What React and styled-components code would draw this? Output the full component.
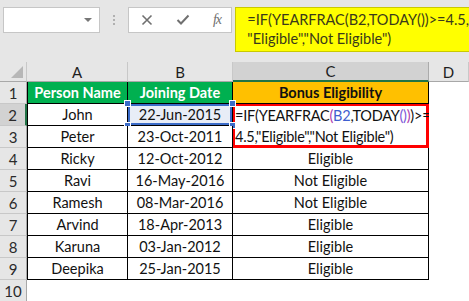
import { createGlobalStyle, styled } from "styled-components";

const Global = createGlobalStyle`
  html, body {
    margin: 0;
    padding: 0;
    background: #ffffff;
  }
  body {
    width: 469px;
    height: 301px;
    overflow: hidden;
    font-family: Lato, "Open Sans", sans-serif;
  }
`;

const Wrap = styled.div`
  width: 469px;
  height: 301px;
  overflow: hidden;
  background: #ffffff;
`;

const TopBar = styled.div`
  height: 62px;
  background: #e6e6e6;
  display: flex;
  align-items: flex-start;
  padding: 7px 0 0 3px;
  box-sizing: border-box;
`;

const NameBox = styled.div`
  width: 102px;
  height: 26px;
  box-sizing: border-box;
  background: #ffffff;
  border: 1px solid #c6c6c6;
  display: flex;
  align-items: center;
  justify-content: flex-end;
  padding-right: 7px;
`;

const Caret = styled.div`
  width: 0;
  height: 0;
  border-left: 4px solid transparent;
  border-right: 4px solid transparent;
  border-top: 4px solid #777777;
`;

const Dots = styled.div`
  width: 30px;
  height: 26px;
  display: flex;
  flex-direction: column;
  align-items: center;
  justify-content: center;
  gap: 2px;
  span {
    width: 2px;
    height: 2px;
    background: #b0b0b0;
  }
`;

const FormulaTools = styled.div`
  width: 110px;
  height: 26px;
  box-sizing: border-box;
  background: #ffffff;
  border: 1px solid #c6c6c6;
  display: flex;
  align-items: center;
  gap: 23px;
  padding-left: 12px;
`;

const Fx = styled.span`
  font-family: "Liberation Serif", serif;
  font-style: italic;
  font-size: 14px;
  color: #6e6e6e;
  letter-spacing: -1px;
`;

const Callout = styled.div`
  margin-left: 3px;
  flex: 1;
  height: 45px;
  box-sizing: border-box;
  background: #ffff00;
  border: 1px solid #c9c900;
  border-right: none;
  padding: 2px 0 0 11px;
  font-size: 14.5px;
  line-height: 19px;
  color: #3a3a1a;
  white-space: nowrap;
`;

const Sheet = styled.div`
  display: grid;
  grid-template-columns: 27px 101px 105px 196px 40px;
  grid-template-rows: 20px;
  grid-auto-rows: 22px;
  font-size: 14.5px;
`;

const Corner = styled.div`
  background: #e6e6e6;
  border-right: 1px solid #c8c8c8;
  border-bottom: 1px solid #a8a8a8;
  position: relative;
  &::after {
    content: "";
    position: absolute;
    right: 3px;
    bottom: 3px;
    width: 0;
    height: 0;
    border-left: 12px solid transparent;
    border-bottom: 12px solid #b7b7b7;
  }
`;

const ColHead = styled.div`
  background: ${(p) => (p.$active ? "#d2d2d2" : "#e6e6e6")};
  border-right: 1px solid ${(p) => (p.$active ? "#ababab" : "#c8c8c8")};
  border-bottom: ${(p) => (p.$active ? "2px solid #217346" : "1px solid #a8a8a8")};
  display: flex;
  align-items: center;
  justify-content: center;
  font-size: 15px;
  color: #1e1e1e;
`;

const RowHead = styled.div`
  background: ${(p) => (p.$active ? "#d2d2d2" : "#e6e6e6")};
  border-right: ${(p) => (p.$active ? "2px solid #217346" : "1px solid #a8a8a8")};
  border-bottom: 1px solid #c8c8c8;
  display: flex;
  align-items: center;
  justify-content: center;
  font-size: 15px;
  color: #2a2a2a;
`;

const Cell = styled.div`
  position: relative;
  box-sizing: border-box;
  border-right: 1px solid ${(p) => (p.$empty ? "transparent" : "#000")};
  border-bottom: 1px solid ${(p) => (p.$empty ? "transparent" : "#000")};
  background: ${(p) => p.$bg || "#ffffff"};
  color: ${(p) => (p.$bg ? "#ffffff" : "#111111")};
  font-weight: ${(p) => (p.$bold ? 700 : 400)};
  display: flex;
  align-items: center;
  justify-content: center;
  white-space: nowrap;
`;

const FirstCell = styled(Cell)`
  border-left: 1px solid #000;
`;

const HeadCell = styled(Cell)`
  color: ${(p) => (p.$dark ? "#111" : "#fff")};
`;

const FirstHeadCell = styled(HeadCell)`
  border-left: 1px solid #000;
`;

const Selected = styled(Cell)`
  background: #e8edf7;
  box-shadow: inset 0 0 0 2px #3b6cc9;
`;

const Handle = styled.span`
  position: absolute;
  width: 5px;
  height: 5px;
  background: #3b6cc9;
  border: 1px solid #ffffff;
  ${(p) => (p.$top ? "top: -4px;" : "bottom: -4px;")}
  ${(p) => (p.$left ? "left: -4px;" : "right: -4px;")}
`;

const FormulaCell = styled.div`
  grid-row: span 2;
  box-sizing: border-box;
  border: 3px solid #ff0000;
  margin: -1px 0 0 -1px;
  display: flex;
  flex-direction: column;
  justify-content: center;
  line-height: 21px;
  white-space: nowrap;
  color: #111;
  letter-spacing: -0.25px;
`;

const Ref = styled.span`
  color: ${(p) => p.$c};
`;

const rows = [
  ["Ricky", "12-Oct-2012", "Eligible"],
  ["Ravi", "16-May-2016", "Not Eligible"],
  ["Ramesh", "08-Mar-2016", "Not Eligible"],
  ["Arvind", "18-Apr-2013", "Eligible"],
  ["Karuna", "03-Jan-2012", "Eligible"],
  ["Deepika", "25-Jan-2015", "Eligible"],
];

function Row({ n, r }) {
  return (
    <>
      <RowHead>{n}</RowHead>
      <FirstCell>{r[0]}</FirstCell>
      <Cell>{r[1]}</Cell>
      <Cell>{r[2]}</Cell>
      <Cell $empty />
    </>
  );
}

export default function App() {
  return (
    <Wrap>
      <Global />
      <TopBar>
        <NameBox>
          <Caret />
        </NameBox>
        <Dots>
          <span />
          <span />
          <span />
        </Dots>
        <FormulaTools>
          <svg width="12" height="12" viewBox="0 0 12 12">
            <path d="M1.5 1.5 L10.5 10.5 M10.5 1.5 L1.5 10.5" stroke="#707070" strokeWidth="1.6" />
          </svg>
          <svg width="14" height="12" viewBox="0 0 14 12">
            <path d="M1.5 6 L5 9.5 L12.5 1.5" stroke="#707070" strokeWidth="2" fill="none" />
          </svg>
          <Fx>fx</Fx>
        </FormulaTools>
        <Callout>
          =IF(YEARFRAC(B2,TODAY())&gt;=4.5,
          <br />
          "Eligible","Not Eligible")
        </Callout>
      </TopBar>

      <Sheet>
        <Corner />
        <ColHead>A</ColHead>
        <ColHead>B</ColHead>
        <ColHead $active>C</ColHead>
        <ColHead>D</ColHead>

        <RowHead>1</RowHead>
        <FirstHeadCell $bg="#00b050" $bold>Person Name</FirstHeadCell>
        <HeadCell $bg="#00b050" $bold>Joining Date</HeadCell>
        <HeadCell $bg="#ffc000" $bold $dark>Bonus Eligibility</HeadCell>
        <Cell $empty />

        <RowHead $active>2</RowHead>
        <FirstCell>John</FirstCell>
        <Selected>
          22-Jun-2015
          <Handle $top $left />
          <Handle $top />
          <Handle $left />
          <Handle />
        </Selected>
        <FormulaCell>
          <div>
            =IF(YEARFRAC<Ref $c="#b03cae">(</Ref>
            <Ref $c="#3f5fd0">B2</Ref>,TODAY<Ref $c="#7b57d8">()</Ref>
            <Ref $c="#b03cae">)</Ref>)&gt;=
          </div>
          <div>4.5,"Eligible","Not Eligible")</div>
        </FormulaCell>
        <Cell $empty />

        <RowHead>3</RowHead>
        <FirstCell>Peter</FirstCell>
        <Cell>23-Oct-2011</Cell>
        <Cell $empty />

        {rows.map((r, i) => (
          <Row key={r[0]} n={i + 4} r={r} />
        ))}

        <RowHead>10</RowHead>
        <Cell $empty />
        <Cell $empty />
        <Cell $empty />
        <Cell $empty />
      </Sheet>
    </Wrap>
  );
}
